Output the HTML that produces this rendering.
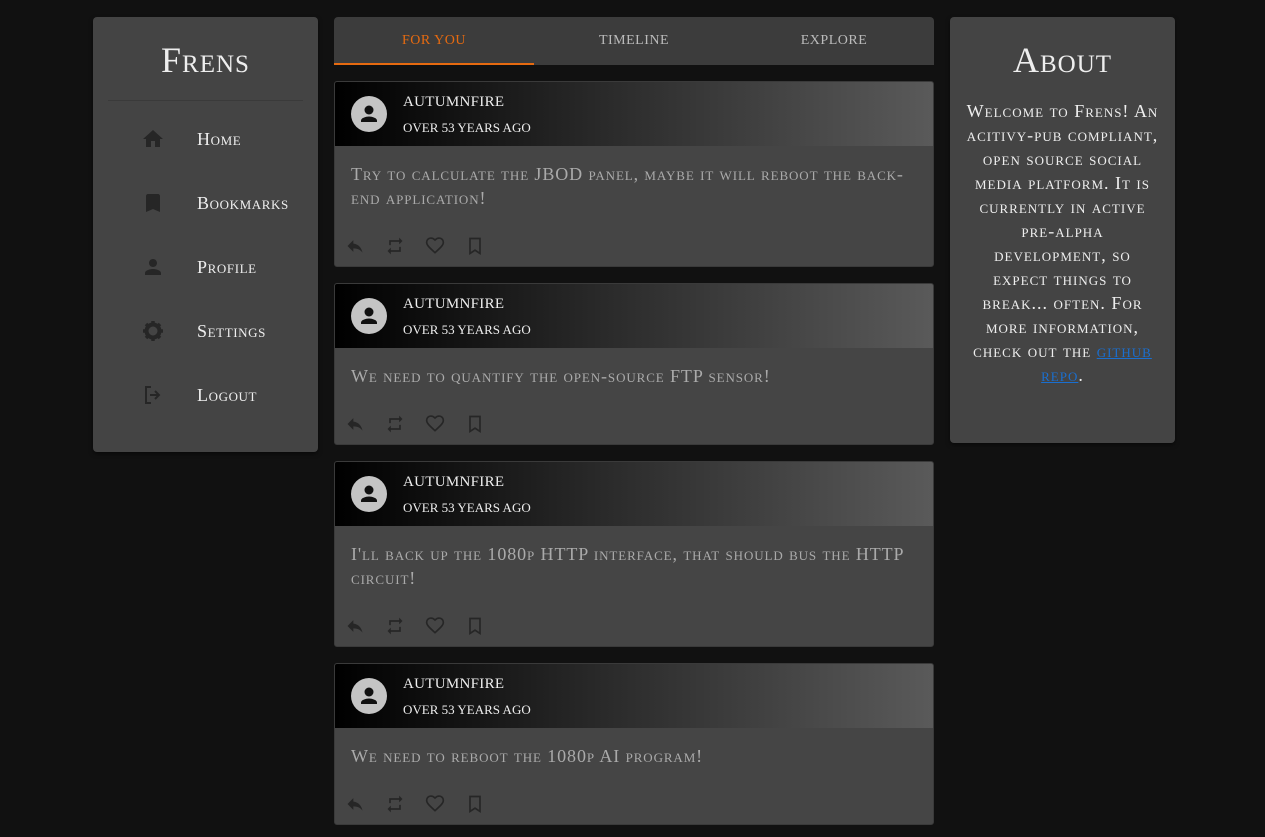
<!DOCTYPE html>
<html><head><style>
*{box-sizing:border-box;margin:0;padding:0}
body{width:1265px;height:837px;background:#111;font-family:"Liberation Serif",serif;font-variant:small-caps;color:#eee;position:relative;overflow:hidden}
.panel{position:absolute;background:#444;border-radius:4px;box-shadow:0 2px 4px rgba(0,0,0,.5)}
#nav{left:93px;top:17px;width:225px;height:435px}
#nav h1{font-weight:normal;font-size:36px;text-align:center;margin-top:22px;height:61px;letter-spacing:1px}
#nav hr{border:0;border-top:1px solid #3a3a3a;margin:0 15px}
.item{position:absolute;left:0;height:30px;font-size:18px;display:flex;align-items:center;letter-spacing:0.6px}
.item svg{position:absolute;left:48px}
.item span{position:absolute;left:104px;white-space:nowrap}
#tabs{position:absolute;left:334px;top:17px;width:600px;height:48px;background:#3c3c3c;border-radius:4px 4px 0 0;display:flex;font-size:14px;color:#bbb;letter-spacing:0.5px}
#tabs div{flex:1;text-align:center;line-height:48px}
#tabs .on{color:#e66a10;border-bottom:2px solid #e66a10;line-height:48px}
.post{position:absolute;left:334px;width:600px;background:#454545;border:1px solid #3a3a3a;border-radius:3px;overflow:hidden}
.ph{height:64px;background:linear-gradient(90deg,#000 0%,#2a2a2a 45%,#5a5a5a 100%);position:relative}
.av{position:absolute;left:16px;top:14px;width:36px;height:36px;border-radius:50%;background:#c4c4c4}
.nm{position:absolute;left:68px;top:12px;font-size:15px;text-transform:uppercase;letter-spacing:0.3px}
.tm{position:absolute;left:68px;top:38px;font-size:13px;text-transform:uppercase;letter-spacing:0}
.pb{padding:16px 16px 0 16px;font-size:18px;color:#aaa;line-height:24px;letter-spacing:0.9px}
.act{position:absolute;left:10px;bottom:10px;display:flex;gap:20px}
#about{left:950px;top:17px;width:225px;height:426px;text-align:center}
#about h2{font-weight:normal;font-size:36px;margin-top:22px;letter-spacing:1px}
#about p{font-size:18px;line-height:24px;margin:18px 16px 0;letter-spacing:1px}
#about a{color:#1a6fd0;text-decoration:underline}
</style></head><body>
<div class="panel" id="nav">
<h1>Frens</h1><hr>
<div class="item" style="top:107px"><svg width="24" height="24" viewBox="0 0 24 24"><path d="M10 20v-6h4v6h5v-8h3L12 3 2 12h3v8z" fill="#262626"/></svg><span>Home</span></div>
<div class="item" style="top:171px"><svg width="24" height="24" viewBox="0 0 24 24"><path d="M17 3H7c-1.1 0-2 .9-2 2v16l7-3 7 3V5c0-1.1-.9-2-2-2z" fill="#262626"/></svg><span>Bookmarks</span></div>
<div class="item" style="top:235px"><svg width="24" height="24" viewBox="0 0 24 24"><path d="M12 12c2.2 0 4-1.8 4-4s-1.8-4-4-4-4 1.8-4 4 1.8 4 4 4zm0 2c-2.7 0-8 1.3-8 4v2h16v-2c0-2.7-5.3-4-8-4z" fill="#262626"/></svg><span>Profile</span></div>
<div class="item" style="top:299px"><svg width="24" height="24" viewBox="0 0 24 24"><circle cx="12" cy="12" r="6.5" fill="none" stroke="#262626" stroke-width="4"/><path d="M12 2v4M12 18v4M2 12h4M18 12h4M5 5l3 3M16 16l3 3M5 19l3-3M16 8l3-3" stroke="#262626" stroke-width="3.5"/></svg><span>Settings</span></div>
<div class="item" style="top:363px"><svg width="24" height="24" viewBox="0 0 24 24"><path d="M10 4H5v16h5M14 8l4 4-4 4M9 12h9" fill="none" stroke="#262626" stroke-width="2"/></svg><span>Logout</span></div>
</div>
<div id="tabs"><div class="on">FOR YOU</div><div>TIMELINE</div><div>EXPLORE</div></div>

<div class="post" style="top:81px;height:186px"><div class="ph"><div class="av"></div><div class="nm">autumnfire</div><div class="tm">over 53 years ago</div></div><div class="pb">Try to calculate the JBOD panel, maybe it will reboot the back-end application!</div>ACT</div>
<div class="post" style="top:283px;height:162px"><div class="ph"><div class="av"></div><div class="nm">autumnfire</div><div class="tm">over 53 years ago</div></div><div class="pb">We need to quantify the open-source FTP sensor!</div>ACT</div>
<div class="post" style="top:461px;height:186px"><div class="ph"><div class="av"></div><div class="nm">autumnfire</div><div class="tm">over 53 years ago</div></div><div class="pb">I'll back up the 1080p HTTP interface, that should bus the HTTP circuit!</div>ACT</div>
<div class="post" style="top:663px;height:162px"><div class="ph"><div class="av"></div><div class="nm">autumnfire</div><div class="tm">over 53 years ago</div></div><div class="pb">We need to reboot the 1080p AI program!</div>ACT</div>

<div class="panel" id="about"><h2>About</h2>
<p>Welcome to Frens! An acitivy-pub compliant, open source social media platform. It is currently in active pre-alpha development, so expect things to break... often. For more information, check out the <a>github repo</a>.</p></div>
<script>
var act='<div class="act"><svg width="20" height="20" viewBox="0 0 24 24"><path d="M10 9V5l-7 7 7 7v-4.1c5 0 8.5 1.6 11 5.1-1-5-4-10-11-11z" fill="#262626"/></svg><svg width="20" height="20" viewBox="0 0 24 24"><path d="M7 7h10v3l4-4-4-4v3H5v6h2zM17 17H7v-3l-4 4 4 4v-3h12v-6h-2z" fill="#262626"/></svg><svg width="20" height="20" viewBox="0 0 24 24"><path d="M12 20l-1.4-1.3C5.4 14 2 11 2 7.5 2 4.6 4.3 2.5 7 2.5c1.8 0 3.6.9 5 2.3 1.4-1.4 3.2-2.3 5-2.3 2.7 0 5 2.1 5 5 0 3.5-3.4 6.5-8.6 11.2z" fill="none" stroke="#262626" stroke-width="2"/></svg><svg width="20" height="20" viewBox="0 0 24 24"><path d="M6 3h12v18l-6-4-6 4z" fill="none" stroke="#262626" stroke-width="2"/></svg></div>';
document.querySelectorAll('.post').forEach(function(p){p.innerHTML=p.innerHTML.replace('ACT',act)});
var av='<svg width="36" height="36" viewBox="0 0 36 36"><circle cx="18" cy="14" r="4.5" fill="#111"/><path d="M10 26v-1.5c0-2.5 5-4 8-4s8 1.5 8 4V26z" fill="#111"/></svg>';
document.querySelectorAll('.av').forEach(function(a){a.innerHTML=av});
</script>
</body></html>
